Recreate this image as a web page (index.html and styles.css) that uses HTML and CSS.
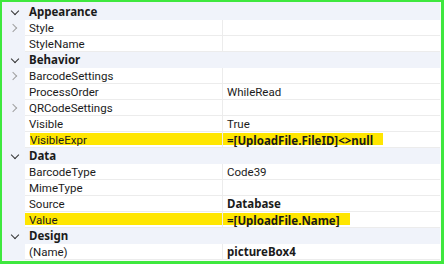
FILE: index.html
```html
<!DOCTYPE html>
<html lang="en">
  <head>
    <meta charset="UTF-8" />
    <title>Properties</title>
    <link rel="stylesheet" href="styles.css">
  </head>
  <body>
    <div class="grid">
      <div class="row cat"><span class="toggle down"></span><span class="name">Appearance</span></div>
      <div class="row"><span class="toggle right"></span><span class="name">Style</span><span class="value"></span></div>
      <div class="row"><span class="toggle"></span><span class="name">StyleName</span><span class="value"></span></div>

      <div class="row cat"><span class="toggle down"></span><span class="name">Behavior</span></div>
      <div class="row"><span class="toggle right"></span><span class="name">BarcodeSettings</span><span class="value"></span></div>
      <div class="row"><span class="toggle"></span><span class="name">ProcessOrder</span><span class="value">WhileRead</span></div>
      <div class="row"><span class="toggle right"></span><span class="name">QRCodeSettings</span><span class="value"></span></div>
      <div class="row"><span class="toggle"></span><span class="name">Visible</span><span class="value">True</span></div>
      <div class="row"><span class="toggle"></span><span class="name"><mark class="hl hl-name-a">VisibleExpr</mark></span><span class="value"><mark class="hl hl-val-a"><b>=[UploadFile.FileID]&lt;&gt;null</b></mark></span></div>

      <div class="row cat"><span class="toggle down"></span><span class="name">Data</span></div>
      <div class="row"><span class="toggle"></span><span class="name">BarcodeType</span><span class="value">Code39</span></div>
      <div class="row"><span class="toggle"></span><span class="name">MimeType</span><span class="value"></span></div>
      <div class="row"><span class="toggle"></span><span class="name">Source</span><span class="value"><b>Database</b></span></div>
      <div class="row"><span class="toggle"></span><span class="name"><mark class="hl hl-name-b">Value</mark></span><span class="value"><mark class="hl hl-val-b"><b>=[UploadFile.Name]</b></mark></span></div>

      <div class="row cat"><span class="toggle down"></span><span class="name">Design</span></div>
      <div class="row"><span class="toggle"></span><span class="name">(Name)</span><span class="value"><b>pictureBox4</b></span></div>
    </div>
  </body>
</html>
```

FILE: styles.css
```css
* {
  margin: 0;
  padding: 0;
  box-sizing: border-box;
}

body {
  background: #3ee83e;
  padding: 2px 3px 3px 2px;
  height: 264px;
  overflow: hidden;
  font-family: Roboto, "Segoe UI", sans-serif;
  font-size: 11.5px;
  color: #1b1b1b;
}

b,
.row.cat .name {
  font-family: "Noto Sans", sans-serif;
  font-weight: bold;
}

.grid {
  background: #f0f3fa;
  height: 100%;
  padding-top: 2px;
  border-right: 1px solid #fafafa;
  border-bottom: 1px solid #fafafa;
}

.row {
  display: grid;
  grid-template-columns: 23px 197px 1fr;
  height: 16px;
  line-height: 16px;
}

.row .name,
.row .value {
  background: #fff;
  border-bottom: 1px solid #ececec;
  white-space: nowrap;
  overflow: hidden;
}

.row .name {
  padding-left: 4px;
}

.row .value {
  padding-left: 4px;
  border-left: 1px solid #ececec;
}

.row.cat .name {
  background: transparent;
  border-bottom: none;
  grid-column: 2 / 4;
}

.toggle {
  position: relative;
}

.toggle.right::before,
.toggle.down::before {
  content: "";
  position: absolute;
  width: 5px;
  height: 5px;
  border-right: 1.5px solid #a0a0a0;
  border-bottom: 1.5px solid #a0a0a0;
}

.toggle.right::before {
  left: 8px;
  top: 5px;
  transform: rotate(-45deg);
}

.toggle.down::before {
  left: 10px;
  top: 4px;
  border-color: #333;
  transform: rotate(45deg);
}

.hl {
  display: inline-block;
  background: #ffe600;
  color: inherit;
  height: 12px;
  line-height: 15px;
  vertical-align: top;
  margin-top: 1px;
  overflow: visible;
}

.hl-name-a {
  margin-left: 1px;
  width: 193px;
}

.hl-val-a {
  margin-left: -4px;
  padding-left: 4px;
  width: 160px;
}

.hl-name-b {
  margin-left: -4px;
  padding-left: 4px;
  width: 197px;
}

.hl-val-b {
  margin-left: -4px;
  padding-left: 4px;
  width: 127px;
}
```
